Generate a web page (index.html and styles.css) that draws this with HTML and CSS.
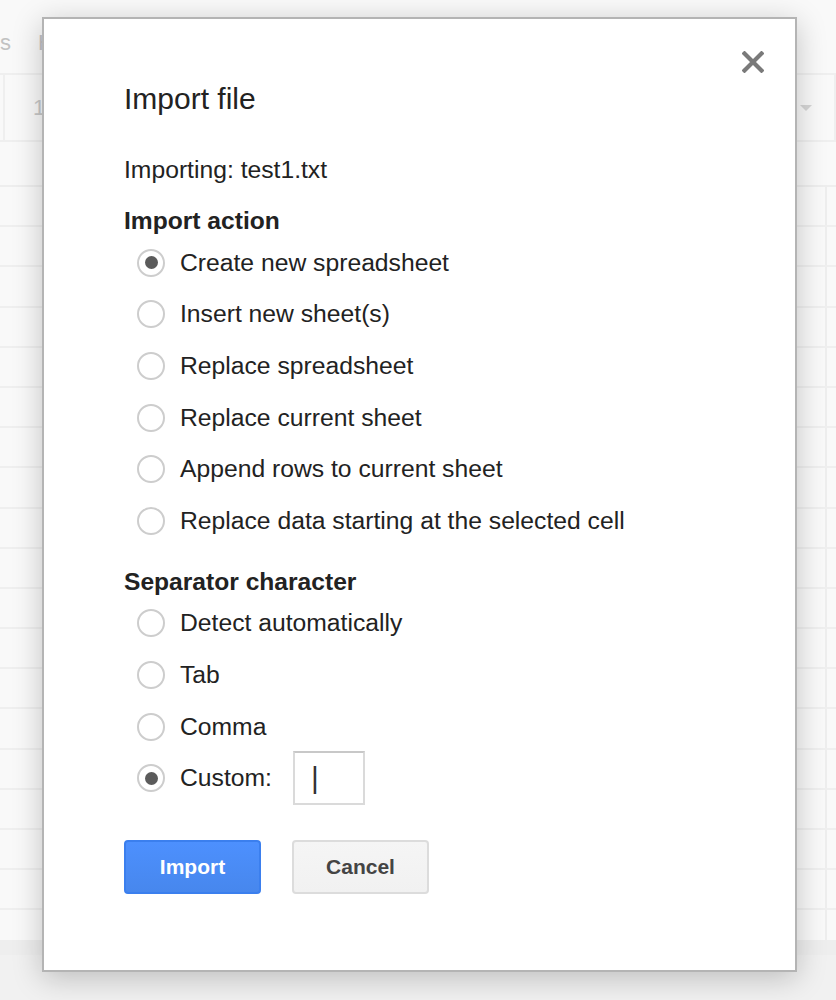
FILE: index.html
```html
<!DOCTYPE html>
<html>
<head>
<meta charset="utf-8">
<link rel="stylesheet" href="styles.css">
</head>
<body>
<div class="app">
  <div class="menubar">
    <span class="menu-item">s</span>
    <span class="menu-item">Help</span>
  </div>
  <div class="toolbar">
    <div class="tool-group">100%</div>
    <div class="tool-spacer"></div>
    <div class="tool-drop"><span class="caret"></span></div>
  </div>
  <div class="formula"></div>
  <div class="grid">
    <div class="row"></div><div class="row"></div><div class="row"></div><div class="row"></div>
    <div class="row"></div><div class="row"></div><div class="row"></div><div class="row"></div>
    <div class="row"></div><div class="row"></div><div class="row"></div><div class="row"></div>
    <div class="row"></div><div class="row"></div><div class="row"></div><div class="row"></div>
    <div class="row"></div><div class="row"></div>
  </div>
  <div class="scrollband"></div>
  <div class="tabs"></div>
</div>

<div class="dialog">
  <button class="close" aria-label="Close">
    <svg width="22" height="22" viewBox="0 0 22 22"><path d="M2.5 2.5 L19.5 19.5 M19.5 2.5 L2.5 19.5" stroke="#7a7a7a" stroke-width="4.2" stroke-linecap="square" fill="none"/></svg>
  </button>
  <h1 class="title">Import file</h1>
  <p class="file">Importing: test1.txt</p>

  <h2 class="section">Import action</h2>
  <div class="options">
    <div class="option"><span class="radio checked"></span><span class="label">Create new spreadsheet</span></div>
    <div class="option"><span class="radio"></span><span class="label">Insert new sheet(s)</span></div>
    <div class="option"><span class="radio"></span><span class="label">Replace spreadsheet</span></div>
    <div class="option"><span class="radio"></span><span class="label">Replace current sheet</span></div>
    <div class="option"><span class="radio"></span><span class="label">Append rows to current sheet</span></div>
    <div class="option"><span class="radio"></span><span class="label">Replace data starting at the selected cell</span></div>
  </div>

  <h2 class="section sep">Separator character</h2>
  <div class="options">
    <div class="option"><span class="radio"></span><span class="label">Detect automatically</span></div>
    <div class="option"><span class="radio"></span><span class="label">Tab</span></div>
    <div class="option"><span class="radio"></span><span class="label">Comma</span></div>
    <div class="option"><span class="radio checked"></span><span class="label">Custom:</span><span class="custom-box">|</span></div>
  </div>

  <div class="buttons">
    <button class="btn primary">Import</button>
    <button class="btn secondary">Cancel</button>
  </div>
</div>
</body>
</html>
```

FILE: styles.css
```css
html, body {
  margin: 0;
  padding: 0;
}
body {
  width: 836px;
  height: 1000px;
  overflow: hidden;
  background: #f9f9f9;
  font-family: "Liberation Sans", Arial, sans-serif;
  position: relative;
}

/* faded spreadsheet background */
.app {
  display: flex;
  flex-direction: column;
  height: 1000px;
}
.menubar {
  height: 73px;
  display: flex;
  align-items: center;
  gap: 27px;
  margin-left: 0;
  font-size: 22px;
  color: #c2c2c2;
  box-sizing: border-box;
  padding-top: 12px;
}
.toolbar {
  height: 69px;
  box-sizing: border-box;
  border-top: 2px solid #efefef;
  border-bottom: 2px solid #efefef;
  display: flex;
  align-items: stretch;
}
.tool-group {
  margin-left: 3px;
  border-left: 2px solid #efefef;
  padding-left: 28px;
  display: flex;
  align-items: center;
  font-size: 22px;
  color: #c8c8c8;
  width: 60px;
}
.tool-spacer { flex: 1; }
.tool-drop {
  width: 34px;
  border-right: 2px solid #efefef;
  display: flex;
  align-items: center;
  justify-content: flex-start;
  padding-left: 6px;
}
.caret {
  width: 0;
  height: 0;
  border-left: 6px solid transparent;
  border-right: 6px solid transparent;
  border-top: 6px solid #d6d6d6;
}
.formula {
  height: 45px;
  box-sizing: border-box;
  border-bottom: 2px solid #eeeeee;
}
.grid {
  height: 753px;
  overflow: hidden;
  background: linear-gradient(to right, transparent 825px, #eeeeee 825px, #eeeeee 827px, transparent 827px);
}
.row {
  height: 40.2px;
  box-sizing: border-box;
  border-bottom: 2px solid #efefef;
}
.scrollband {
  height: 15px;
  background: #eeeeee;
}
.tabs {
  flex: 1;
  background: #f1f1f1;
}

/* dialog */
.dialog {
  position: absolute;
  left: 42px;
  top: 17px;
  width: 755px;
  height: 955px;
  box-sizing: border-box;
  background: #fff;
  border: 2px solid #b4b4b4;
  box-shadow: 0 6px 28px rgba(0, 0, 0, 0.22);
  padding: 62px 0 0 80px;
  color: #222;
}
.close {
  position: absolute;
  top: 32px;
  right: 31px;
  width: 22px;
  height: 22px;
  padding: 0;
  border: 0;
  background: none;
  display: block;
}
.close svg { display: block; }

.title {
  margin: 0;
  font-size: 30px;
  font-weight: normal;
  line-height: 36px;
  color: #222;
}
.file {
  margin: 38px 0 0;
  font-size: 24.7px;
  line-height: 30px;
  color: #222;
}
.section {
  margin: 21px 0 1px;
  font-size: 24.6px;
  font-weight: bold;
  line-height: 30px;
  color: #222;
}
.section.sep {
  margin-top: 20px;
  margin-bottom: 1px;
}
.options {
  display: flex;
  flex-direction: column;
}
.option {
  height: 51.6px;
  display: flex;
  align-items: center;
  font-size: 24.7px;
  color: #222;
}
.radio {
  width: 28px;
  height: 28px;
  box-sizing: border-box;
  border: 2px solid #cdcdcd;
  border-radius: 50%;
  margin-left: 13px;
  margin-right: 15px;
  display: flex;
  align-items: center;
  justify-content: center;
  background: #fff;
  flex: none;
}
.radio.checked::after {
  content: "";
  width: 13px;
  height: 13px;
  border-radius: 50%;
  background: #5b5b5b;
}
.custom-box {
  margin-left: 21px;
  width: 72px;
  height: 54px;
  box-sizing: border-box;
  border: 2px solid #dadada;
  border-top-color: #c8c8c8;
  display: flex;
  align-items: center;
  padding-left: 16px;
  font-size: 30px;
  color: #333;
  font-weight: normal;
  line-height: 1;
}

.buttons {
  display: flex;
  gap: 31px;
  margin-top: 36px;
}
.btn {
  width: 137px;
  height: 54px;
  box-sizing: border-box;
  border-radius: 4px;
  font-family: "Liberation Sans", Arial, sans-serif;
  font-weight: bold;
  font-size: 21px;
  padding: 0;
}
.primary {
  background: linear-gradient(#4d90fe, #4787ed);
  border: 2px solid #3b7fee;
  color: #fff;
}
.secondary {
  background: linear-gradient(#f5f5f5, #f1f1f1);
  border: 2px solid #dcdcdc;
  color: #444;
}
```
